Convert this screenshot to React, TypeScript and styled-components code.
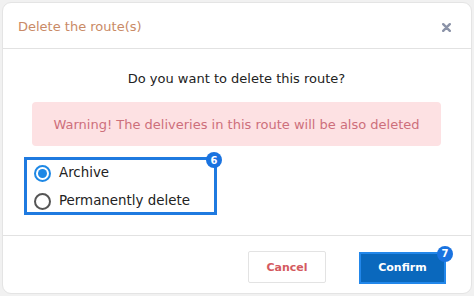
import styled, { createGlobalStyle } from 'styled-components';

const GlobalStyle = createGlobalStyle`
  html, body {
    margin: 0;
    padding: 0;
    background: #f1f1f1;
  }
  body {
    font-family: "DejaVu Sans", "Noto Sans", sans-serif;
  }
`;

const Page = styled.div`
  width: 474px;
  height: 296px;
  padding: 2px;
  box-sizing: border-box;
`;

const Dialog = styled.div`
  height: 292px;
  background: #fff;
  border: 1px solid #e4e4e4;
  border-radius: 9px;
  box-sizing: border-box;
  display: flex;
  flex-direction: column;
`;

const Header = styled.div`
  height: 46px;
  display: flex;
  align-items: center;
  justify-content: space-between;
  padding: 0 19px 0 15px;
  border-bottom: 1px solid #e2e2e2;
  box-sizing: border-box;
`;

const Title = styled.div`
  font-size: 13px;
  color: #c98a66;
  padding-top: 2px;
`;

const CloseButton = styled.div`
  width: 12px;
  height: 12px;
  display: flex;
  align-items: center;
  justify-content: center;
  padding-top: 3px;
`;

const Body = styled.div`
  flex: 1;
  display: flex;
  flex-direction: column;
  padding: 20px 30px 0 29px;
  border-bottom: 1px solid #e2e2e2;
`;

const Question = styled.div`
  font-size: 13px;
  line-height: 20px;
  color: #222;
  text-align: center;
`;

const Warning = styled.div`
  margin-top: 13px;
  height: 44px;
  border-radius: 4px;
  background: #fde1e3;
  color: #cd6f7b;
  font-size: 13px;
  display: flex;
  align-items: center;
  justify-content: center;
`;

const RadioBox = styled.div`
  position: relative;
  align-self: flex-start;
  margin: 11px 0 0 -8px;
  width: 193px;
  height: 58px;
  border: 3px solid #1f7ae0;
  box-sizing: border-box;
  display: flex;
  flex-direction: column;
  justify-content: center;
  gap: 8px;
  padding: 2px 0 0 7px;
`;

const Badge = styled.div<{ $top: number; $right: number }>`
  position: absolute;
  top: ${(p) => p.$top}px;
  right: ${(p) => p.$right}px;
  width: 16px;
  height: 16px;
  border-radius: 50%;
  background: #1a73e0;
  color: #fff;
  font-size: 10px;
  font-weight: bold;
  display: flex;
  align-items: center;
  justify-content: center;
`;

const RadioRow = styled.label`
  display: flex;
  align-items: center;
  gap: 8px;
  font-size: 13.4px;
  color: #222;
  line-height: 20px;
`;

const RadioCircle = styled.span<{ $checked?: boolean }>`
  width: 17px;
  height: 17px;
  border-radius: 50%;
  border: 2px solid ${(p) => (p.$checked ? '#1e88e5' : '#555')};
  box-sizing: border-box;
  display: flex;
  align-items: center;
  justify-content: center;
  &::after {
    content: '';
    width: 9px;
    height: 9px;
    border-radius: 50%;
    background: ${(p) => (p.$checked ? '#1e88e5' : 'transparent')};
  }
`;

const Footer = styled.div`
  height: 57px;
  display: flex;
  align-items: center;
  justify-content: flex-end;
  gap: 33px;
  padding: 5px 25px 0 0;
  box-sizing: border-box;
`;

const CancelButton = styled.button`
  width: 78px;
  height: 32px;
  background: #fff;
  border: 1px solid #e3e3e3;
  border-radius: 2px;
  color: #d45a60;
  font-family: "DejaVu Sans", sans-serif;
  font-weight: bold;
  font-size: 11px;
`;

const ConfirmWrap = styled.div`
  position: relative;
  border: 2px solid #2287ea;
  margin-top: 1px;
`;

const ConfirmButton = styled.button`
  display: block;
  width: 83px;
  height: 28px;
  background: #0a68bd;
  border: none;
  color: #fff;
  font-family: "DejaVu Sans", sans-serif;
  font-weight: bold;
  font-size: 11px;
`;

const App = () => {
  return (
    <>
      <GlobalStyle />
      <Page>
        <Dialog>
          <Header>
            <Title>Delete the route(s)</Title>
            <CloseButton>
              <svg width="9" height="9" viewBox="0 0 9 9">
                <path d="M1.2 1.2L7.8 7.8M7.8 1.2L1.2 7.8" stroke="#8b93a8" strokeWidth="2.4" strokeLinecap="round" />
              </svg>
            </CloseButton>
          </Header>
          <Body>
            <Question>Do you want to delete this route?</Question>
            <Warning>Warning! The deliveries in this route will be also deleted</Warning>
            <RadioBox>
              <Badge $top={-8} $right={-8}>6</Badge>
              <RadioRow>
                <RadioCircle $checked />
                Archive
              </RadioRow>
              <RadioRow>
                <RadioCircle />
                Permanently delete
              </RadioRow>
            </RadioBox>
          </Body>
          <Footer>
            <CancelButton>Cancel</CancelButton>
            <ConfirmWrap>
              <Badge $top={-8} $right={-9}>7</Badge>
              <ConfirmButton>Confirm</ConfirmButton>
            </ConfirmWrap>
          </Footer>
        </Dialog>
      </Page>
    </>
  );
};

export default App;
